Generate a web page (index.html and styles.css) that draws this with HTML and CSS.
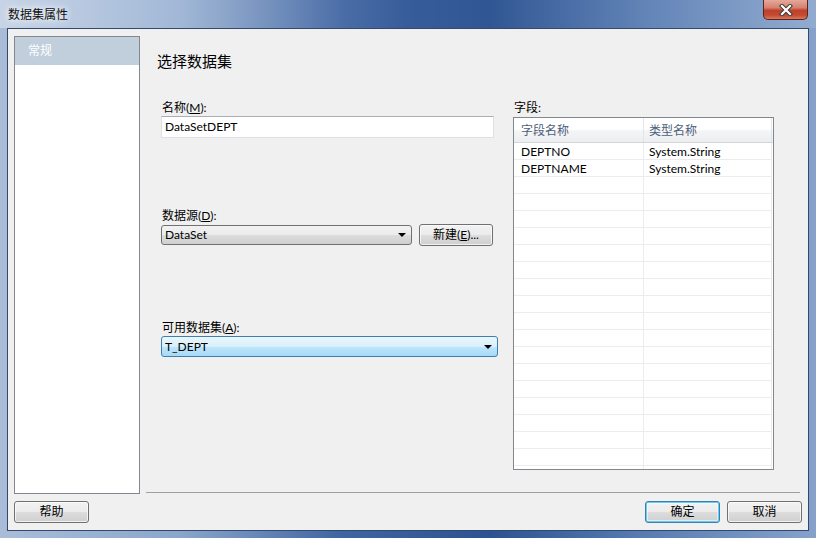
FILE: index.html
```html
<!DOCTYPE html>
<html lang="zh-CN">
<head>
  <meta charset="UTF-8">
  <title>数据集属性</title>
  <link rel="stylesheet" href="styles.css">
</head>
<body>
  <div class="window">
    <div class="titlebar">
      <span class="title">数据集属性</span>
      <div class="close">
        <svg width="16" height="12" viewBox="0 0 16 12">
          <path d="M4 2 L12 10 M12 2 L4 10" stroke="#3b3b3b" stroke-width="4.2" stroke-linecap="square" fill="none"/>
          <path d="M4 2 L12 10 M12 2 L4 10" stroke="#ffffff" stroke-width="2.2" stroke-linecap="square" fill="none"/>
        </svg>
      </div>
    </div>

    <div class="client">
      <div class="main">
        <nav class="nav">
          <div class="nav-item active">常规</div>
        </nav>

        <section class="page">
          <h1>选择数据集</h1>
          <div class="form">
            <div class="col-left">
              <label class="label">名称(<u>M</u>):</label>
              <div class="textbox">DataSetDEPT</div>

              <label class="label source-label">数据源(<u>D</u>):</label>
              <div class="row">
                <div class="combo source">DataSet<span class="arrow"></span></div>
                <div class="btn new-btn">新建(<u>E</u>)...</div>
              </div>

              <label class="label dataset-label">可用数据集(<u>A</u>):</label>
              <div class="combo dataset focused">T_DEPT<span class="arrow"></span></div>
            </div>

            <div class="col-right">
              <label class="label">字段:</label>
              <div class="fields">
                <div class="fields-head">
                  <div class="cell">字段名称</div>
                  <div class="cell">类型名称</div>
                </div>
                <div class="fields-row"><div class="cell">DEPTNO</div><div class="cell">System.String</div></div>
                <div class="fields-row"><div class="cell">DEPTNAME</div><div class="cell">System.String</div></div>
                <div class="fields-row"><div class="cell"></div><div class="cell"></div></div>
                <div class="fields-row"><div class="cell"></div><div class="cell"></div></div>
                <div class="fields-row"><div class="cell"></div><div class="cell"></div></div>
                <div class="fields-row"><div class="cell"></div><div class="cell"></div></div>
                <div class="fields-row"><div class="cell"></div><div class="cell"></div></div>
                <div class="fields-row"><div class="cell"></div><div class="cell"></div></div>
                <div class="fields-row"><div class="cell"></div><div class="cell"></div></div>
                <div class="fields-row"><div class="cell"></div><div class="cell"></div></div>
                <div class="fields-row"><div class="cell"></div><div class="cell"></div></div>
                <div class="fields-row"><div class="cell"></div><div class="cell"></div></div>
                <div class="fields-row"><div class="cell"></div><div class="cell"></div></div>
                <div class="fields-row"><div class="cell"></div><div class="cell"></div></div>
                <div class="fields-row"><div class="cell"></div><div class="cell"></div></div>
                <div class="fields-row"><div class="cell"></div><div class="cell"></div></div>
                <div class="fields-row"><div class="cell"></div><div class="cell"></div></div>
                <div class="fields-row"><div class="cell"></div><div class="cell"></div></div>
                <div class="fields-row"><div class="cell"></div><div class="cell"></div></div>
                <div class="fields-row"><div class="cell"></div><div class="cell"></div></div>
              </div>
            </div>
          </div>
        </section>
      </div>

      <div class="footer">
        <div class="btn">帮助</div>
        <div class="footer-right">
          <div class="btn default">确定</div>
          <div class="btn">取消</div>
        </div>
      </div>
    </div>
  </div>
</body>
</html>
```

FILE: styles.css
```css
body {
    margin: 0;
    font-family: "Lato", "Noto Sans CJK SC", sans-serif;
    font-size: 12px;
    color: #000;
}
.window {
    width: 816px;
    height: 538px;
    box-sizing: border-box;
    background: linear-gradient(90deg, #a9bdd9 0%, #8aa6cc 22%, #3f64a1 42%, #2c5391 60%, #5a7eb4 80%, #86a2cb 100%);
    overflow: hidden;
}
.titlebar {
    height: 28px;
    display: flex;
    justify-content: space-between;
    padding: 0 8px;
    background: linear-gradient(90deg, rgba(255,255,255,0.35) 0%, rgba(255,255,255,0.15) 30%, rgba(255,255,255,0) 50%, rgba(255,255,255,0.1) 100%);
}
.title {
    align-self: center;
    margin-top: -2px;
    color: #111;
    font-family: "Noto Sans CJK SC", sans-serif;
    text-shadow: 0 0 6px #fff, 0 0 10px rgba(255,255,255,0.8);
}
.close {
    width: 45px;
    height: 20px;
    box-sizing: border-box;
    border: 1px solid #5a2418;
    border-top: none;
    border-radius: 0 0 5px 5px;
    background: linear-gradient(180deg, #e7a898 0%, #d48270 40%, #c0412a 55%, #c44a32 80%, #d8785e 100%);
    display: flex;
    align-items: center;
    justify-content: center;
}
.client {
    margin: 0 7px 7px;
    height: 503px;
    box-sizing: border-box;
    border: 1px solid #34496a;
    background: #f0f0f0;
    padding: 7px 8px 0 6px;
}
.main {
    display: flex;
    align-items: flex-start;
    gap: 6px;
}
.nav {
    width: 126px;
    height: 458px;
    box-sizing: border-box;
    border: 1px solid #828790;
    background: #fff;
}
.nav-item {
    height: 28px;
    line-height: 26px;
    padding-left: 13px;
    color: #fff;
    font-family: "Noto Sans CJK SC", sans-serif;
}
.nav-item.active {
    background: #c1cedc;
}
.page {
    flex: 1;
    height: 457px;
    box-sizing: border-box;
    border-bottom: 1px solid #a0a0a0;
    padding: 15px 0 0 11px;
}
.page h1 {
    margin: 0;
    font-size: 15px;
    font-weight: normal;
    line-height: 20px;
    font-family: "Noto Sans CJK SC", sans-serif;
}
.form {
    display: flex;
    gap: 15px;
    margin: 29px 0 0 4px;
}
.col-left {
    width: 337px;
    display: flex;
    flex-direction: column;
    align-items: flex-start;
}
.col-right {
    width: 261px;
}
.label {
    display: block;
    height: 16px;
    line-height: 16px;
    padding-left: 1px;
}
.label u {
    text-underline-offset: 1px;
}
.source-label {
    margin-top: 70px;
}
.dataset-label {
    margin-top: 74px;
}
.textbox {
    width: 333px;
    height: 22px;
    box-sizing: border-box;
    border: 1px solid #dbdfe6;
    border-top-color: #abadb3;
    background: #fff;
    padding-left: 3px;
    line-height: 20px;
}
.row {
    display: flex;
    align-items: center;
    gap: 7px;
}
.combo {
    position: relative;
    box-sizing: border-box;
    border: 1px solid #707070;
    border-radius: 3px;
    background: linear-gradient(180deg, #f2f2f2 0%, #ebebeb 50%, #dddddd 51%, #cfcfcf 100%);
    padding-left: 3px;
}
.combo.source {
    width: 251px;
    height: 20px;
    line-height: 18px;
}
.combo.dataset {
    width: 337px;
    height: 21px;
    line-height: 19px;
}
.combo.focused {
    border-color: #3c7fb1;
    background: linear-gradient(180deg, #eaf6fd 0%, #d9f0fc 50%, #bee6fd 51%, #a7d9f5 100%);
}
.arrow {
    position: absolute;
    right: 5px;
    top: 50%;
    margin-top: -2px;
    border-left: 4px solid transparent;
    border-right: 4px solid transparent;
    border-top: 4px solid #000;
}
.btn {
    width: 75px;
    height: 22px;
    box-sizing: border-box;
    border: 1px solid #707070;
    border-radius: 3px;
    background: linear-gradient(180deg, #f2f2f2 0%, #ebebeb 50%, #dddddd 51%, #cfcfcf 100%);
    box-shadow: inset 0 0 0 1px rgba(255,255,255,0.7);
    text-align: center;
    line-height: 20px;
}
.new-btn {
    width: 74px;
}
.btn.default {
    border-color: #3c7fb1;
    box-shadow: inset 0 0 0 1px #5fcdf6, inset 0 0 0 2px rgba(255,255,255,0.5);
}
.fields {
    margin-top: 1px;
    width: 261px;
    height: 353px;
    box-sizing: border-box;
    border: 1px solid #828790;
    background: #fff;
    overflow: hidden;
}
.fields-head,
.fields-row {
    display: grid;
    grid-template-columns: 130px 128px;
}
.fields-head {
    height: 24px;
    background: linear-gradient(180deg, #ffffff 0%, #ffffff 45%, #f3f4f6 55%, #eceef1 100%);
    border-bottom: 1px solid #d5d5d5;
    color: #4c607a;
}
.fields-head .cell {
    line-height: 25px;
    border-right: 1px solid #e3e5e8;
}
.fields-row {
    height: 17px;
}
.fields-row .cell {
    line-height: 18px;
    border-right: 1px solid #ececec;
    border-bottom: 1px solid #ececec;
}
.cell {
    padding-left: 7px;
    white-space: nowrap;
    overflow: hidden;
}
.cell + .cell {
    padding-left: 5px;
}
.footer {
    display: flex;
    justify-content: space-between;
    margin: 7px -2px 0 0;
}
.footer-right {
    display: flex;
    gap: 7px;
}
```
